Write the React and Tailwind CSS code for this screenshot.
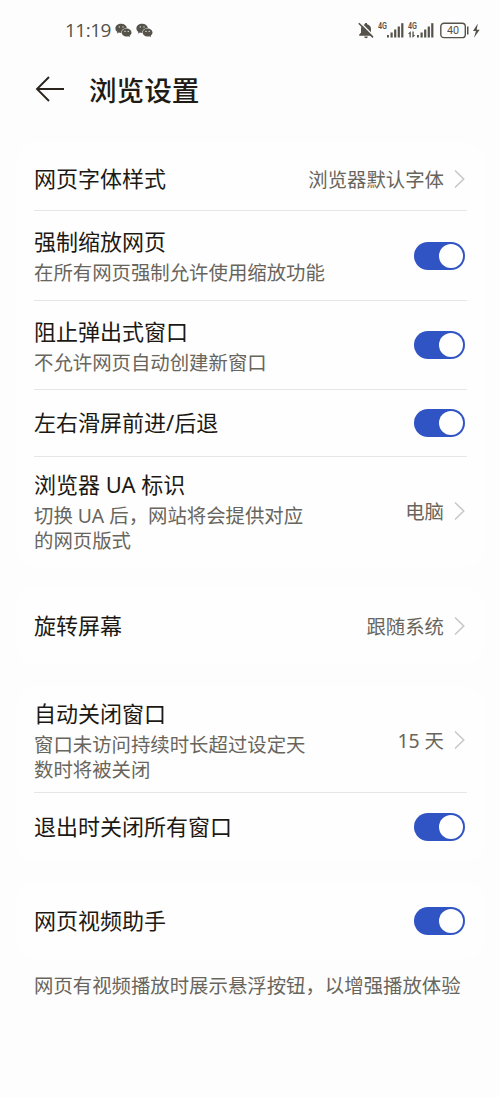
import { useState } from "react";

const WeChatIcon = () => (
  <svg width="17" height="15" viewBox="0 0 17 15" fill="#55524a">
    <path d="M6.2.8C2.9.8.4 2.9.4 5.400c0 1.500.8 2.700 2 3.500l-.5 1.800 2-1.100c.6.2 1.500.3 2.300.3C6.200 7 8.400 5.200 11.900 5.200 11.500 2.600 9.200.8 6.200.8z" />
    <path d="M11.600 5.600c-2.800 0-5 1.700-5 4s2.200 4 5 4c.6 0 1.200-.1 1.700-.3l1.700.9-.4-1.500c1.200-.7 1.900-1.900 1.900-3.100 0-2.300-2.200-4-4.900-4z" />
    <g fill="#fff">
      <circle cx="4.300" cy="3.900" r=".6" />
      <circle cx="8" cy="3.900" r=".6" />
      <circle cx="10" cy="8.400" r=".55" />
      <circle cx="13.200" cy="8.400" r=".55" />
    </g>
  </svg>
);

const MutedBellIcon = () => (
  <svg width="16" height="17" viewBox="0 0 16 17">
    <path
      d="M8 1c-.8 0-1.200.5-1.200 1.200C4.400 2.800 3 4.500 3 6.700v4L1.200 12.500v1.300h13.600v-1.300L13 10.700v-4c0-2.200-1.400-3.900-3.800-4.500C9.200 1.500 8.800 1 8 1zM6.200 14.500c0 1 .8 1.700 1.800 1.700s1.800-.7 1.800-1.700z"
      fill="#55524a"
    />
    <path d="M2 .3L16 14.300" stroke="#fdfdfd" strokeWidth="1.500" />
    <path d="M.8 1.200L15 15.400" stroke="#55524a" strokeWidth="1.600" />
  </svg>
);

const SignalIcon = ({ data }) => (
  <svg width="28" height="17" viewBox="0 0 28 17" fill="#55524a">
    <text
      x="0"
      y="6.800"
      fontSize="8.500"
      fontWeight="600"
      textLength="9"
      lengthAdjust="spacingAndGlyphs"
      fontFamily="Roboto, sans-serif"
    >
      4G
    </text>
    {data && (
      <path d="M2.200 9.500L0 12h1.500v3.500h1.300V9.500zM5 15.500L7.200 13H5.700V9.500H4.400v6z" />
    )}
    <rect x="9" y="13" width="1.900" height="2.500" />
    <rect x="12.500" y="10.500" width="2.200" height="5" />
    <rect x="16.100" y="7.500" width="2.200" height="8" />
    <rect x="19.700" y="4.500" width="2.200" height="11" />
    <rect x="23.200" y="1.200" width="2.200" height="14.300" />
  </svg>
);

const BatteryIcon = () => (
  <svg width="42" height="17" viewBox="0 0 42 17">
    <rect x=".8" y="1.200" width="24.500" height="14.400" rx="3.200" fill="none" stroke="#55524a" strokeWidth="1.400" />
    <rect x="27" y="4.500" width="1.500" height="8" fill="#55524a" />
    <text x="13" y="12.300" fontSize="10.800" textAnchor="middle" fill="#55524a" fontFamily="Roboto, sans-serif">
      40
    </text>
    <path d="M37.800 1.400l-4.800 7.700h2.900L34 15.700l5.700-8h-3z" fill="#55524a" />
  </svg>
);

const Chevron = () => (
  <svg className="ml-2.5 mr-0.5 shrink-0" width="11" height="20" viewBox="0 0 11 20" fill="none">
    <path d="M1 1.500L9.700 10L1 18.500" stroke="#c9c8c6" strokeWidth="1.600" />
  </svg>
);

const Toggle = ({ label }) => {
  const [on, setOn] = useState(true);

  return (
    <button
      role="switch"
      aria-checked={on}
      aria-label={label}
      onClick={() => setOn(!on)}
      className={`mr-0.5 flex h-7 w-[51px] shrink-0 items-center rounded-full px-0.5 ${
        on ? "justify-end bg-[#3154c4]" : "justify-start bg-gray-300"
      }`}
    >
      <span className="size-6 rounded-full bg-white" />
    </button>
  );
};

const Row = ({ title, desc, value, height }) => (
  <div className={`flex items-center justify-between ${height}`}>
    <div>
      <div className="pb-0.5 text-[22px] leading-[30px] text-[#1c1914]">{title}</div>
      {desc && (
        <div className="mt-0.5 whitespace-pre-line text-[19.4px] leading-[25px] text-[#68655c]">
          {desc}
        </div>
      )}
    </div>
    {value ? (
      <div className="flex items-center text-[19.4px] leading-[25px] text-[#68655c]">
        {value}
        <Chevron />
      </div>
    ) : (
      <Toggle label={title} />
    )}
  </div>
);

const Card = ({ className, children }) => (
  <section
    className={`mx-4 divide-y divide-[#e6e6e6] rounded-[20px] bg-[#fefefe] pl-[18px] pr-[17px] ${className}`}
  >
    {children}
  </section>
);

const App = () => {
  return (
    <div
      lang="zh-CN"
      className="min-h-[1097px] w-[500px] bg-[#fdfdfd] font-['Noto_Sans','Noto_Sans_CJK_SC',sans-serif]"
    >
      <div className="flex h-[60px] items-center justify-between pl-[65px] pr-[18px]">
        <div className="flex items-center gap-1">
          <span className="font-['Open_Sans'] text-[19px] leading-6 tracking-[-0.5px] text-[#55524a]">11:19</span>
          <WeChatIcon />
          <WeChatIcon />
        </div>
        <div className="flex items-center">
          <MutedBellIcon />
          <span className="w-1" />
          <SignalIcon />
          <span className="w-0.5" />
          <SignalIcon data />
          <span className="w-1" />
          <BatteryIcon />
        </div>
      </div>

      <header className="flex h-[82px] items-start pl-[35px]">
        <svg className="mt-4" width="30" height="27" viewBox="0 0 30 27" fill="none" stroke="#2a241d" strokeWidth="1.900">
          <path d="M29 13H2M14 1L2 13L14 25" />
        </svg>
        <h1 className="ml-6 mt-2.5 text-[27.6px] font-medium leading-10 text-[#211b15]">浏览设置</h1>
      </header>

      <Card className="pb-0.5 pt-1.5">
        <Row title="网页字体样式" value="浏览器默认字体" height="h-[63px]" />
        <Row title="强制缩放网页" desc="在所有网页强制允许使用缩放功能" height="h-[90px]" />
        <Row title="阻止弹出式窗口" desc="不允许网页自动创建新窗口" height="h-[89px]" />
        <Row title="左右滑屏前进/后退" height="h-[67px]" />
        <Row
          title="浏览器 UA 标识"
          desc={"切换 UA 后，网站将会提供对应\n的网页版式"}
          value="电脑"
          height="h-[108px]"
        />
      </Card>

      <Card className="mt-5">
        <Row title="旋转屏幕" value="跟随系统" height="h-[78px]" />
      </Card>

      <Card className="mt-[21px] pb-0.5 pt-0.5">
        <Row
          title="自动关闭窗口"
          desc={"窗口未访问持续时长超过设定天\n数时将被关闭"}
          value="15 天"
          height="h-[105px]"
        />
        <Row title="退出时关闭所有窗口" height="h-[67px]" />
      </Card>

      <Card className="mt-5">
        <Row title="网页视频助手" height="h-[77px]" />
      </Card>

      <p className="mt-3.5 pl-[34px] text-[19.4px] leading-[25px] text-[#68655c]">
        网页有视频播放时展示悬浮按钮，以增强播放体验
      </p>
    </div>
  );
};

export default App;
